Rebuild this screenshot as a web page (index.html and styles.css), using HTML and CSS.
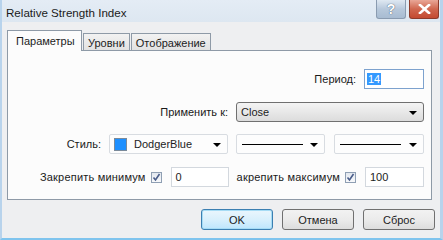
FILE: index.html
```html
<!DOCTYPE html>
<html lang="ru">
<head>
    <meta charset="UTF-8">
    <title>Relative Strength Index</title>
    <link rel="stylesheet" href="styles.css">
</head>
<body>
    <div class="window">
        <!-- заголовок окна -->
        <div class="titlebar">
            <span class="title">Relative Strength Index</span>
            <div class="caption-btns">
                <span class="cap-btn help">?</span>
                <span class="cap-btn close">
                    <svg width="13" height="10" viewBox="0 0 13 10"><path d="M2 1 L11 9 M11 1 L2 9" stroke="#fff" stroke-width="2.6" stroke-linecap="square"/></svg>
                </span>
            </div>
        </div>

        <!-- вкладки -->
        <div class="tabs">
            <div class="tab active">Параметры</div>
            <div class="tab">Уровни</div>
            <div class="tab">Отображение</div>
        </div>

        <div class="panel">
            <div class="row row-period">
                <span class="label">Период:</span>
                <span class="input focus w60"><span class="sel-text">14</span></span>
            </div>
            <div class="row row-apply">
                <span class="label">Применить к:</span>
                <span class="combo w188">Close<span class="arrow"></span></span>
            </div>
            <div class="row row-style">
                <span class="label">Стиль:</span>
                <span class="dd w119"><span class="swatch"></span>DodgerBlue<span class="arrow"></span></span>
                <span class="dd w89"><span class="line"></span><span class="arrow"></span></span>
                <span class="dd w90 gap9"><span class="line"></span><span class="arrow"></span></span>
            </div>
            <div class="row row-fix">
                <span class="label">Закрепить минимум</span>
                <span class="check"><svg width="9" height="9" viewBox="0 0 9 9"><path d="M1.5 4.5 L3.5 7 L7.5 1" fill="none" stroke="#4a5d8a" stroke-width="1.6"/></svg></span>
                <span class="input w58">0</span>
                <span class="label">акрепить максимум</span>
                <span class="check"><svg width="9" height="9" viewBox="0 0 9 9"><path d="M1.5 4.5 L3.5 7 L7.5 1" fill="none" stroke="#4a5d8a" stroke-width="1.6"/></svg></span>
                <span class="input w59">100</span>
            </div>
        </div>

        <div class="buttons">
            <span class="btn default">OK</span>
            <span class="btn">Отмена</span>
            <span class="btn">Сброс</span>
        </div>
    </div>
</body>
</html>
```

FILE: styles.css
```css
* { margin: 0; padding: 0; box-sizing: border-box; }
body { font-family: "Liberation Sans", Arial, sans-serif; font-size: 11px; color: #1c1c1c; background: #f0f0f0; }
.window { width: 443px; height: 240px; background: #eeeff1; border-left: 2px solid #b8d3ec; border-right: 3px solid #b8d3ec; border-bottom: 2px solid #7fc4ee; overflow: hidden; }
.titlebar { height: 22px; display: flex; justify-content: space-between; align-items: flex-start; background: linear-gradient(#e4ecf5, #dde7f1); }
.title { padding: 6px 0 0 4px; font-size: 11.6px; color: #1a1a1a; }
.caption-btns { display: flex; gap: 3px; margin-right: 1px; }
.cap-btn { width: 30px; height: 19px; display: flex; align-items: center; justify-content: center; border: 1px solid #8a9bb0; border-top: none; }
.help { background: linear-gradient(#dfe8f2, #b7c8db 50%, #a8bcd2); color: #fff; font-weight: bold; font-size: 14px; text-shadow: 0 0 1px #55687f, 0 0 1px #55687f; border-radius: 0 0 3px 3px; }
.close { width: 30px; background: linear-gradient(#e9a797, #d0674f 50%, #c44a31); border-color: #8d3b2b; border-radius: 0 0 3px 3px; }
.tabs { display: flex; align-items: flex-end; margin: 8px 0 0 5px; height: 20px; position: relative; z-index: 1; }
.tab { height: 17px; padding: 3px 4px 0 4px; border: 1px solid #8e9aa7; border-bottom: none; background: linear-gradient(#f2f2f2, #e2e2e2); margin-left: 1px; }
.tab.active { height: 21px; margin-bottom: -1px; padding: 4px 8px 0 8px; background: #fcfcfc; margin-left: 0; width: 75px; }
.panel { margin: 0 8px 0 5px; height: 150px; background: #fcfcfc; border: 1px solid #8e9aa7; padding: 18px 7px 0 0; }
.row { display: flex; justify-content: flex-end; align-items: center; gap: 8px; }
.row-apply { margin-top: 13px; }
.row-style { margin-top: 12px; }
.row-fix { margin-top: 13px; gap: 0; }
.label { color: #1a1a1a; }
.row-fix .label { letter-spacing: 0.2px; }
.input { height: 20px; border: 1px solid #d3d8de; background: #fff; padding: 3px 0 0 4px; }
.input.focus { border-color: #7da2ce; padding-left: 2px; }
.sel-text { background: #3399ff; color: #fff; padding: 0 1px; }
.w60 { width: 60px; }
.w58 { width: 58px; }
.w59 { width: 59px; }
.combo { width: 188px; height: 20px; border: 1px solid #707070; border-radius: 3px; background: linear-gradient(#f4f4f4, #e8e8e8 50%, #dcdcdc); padding: 3px 4px; position: relative; }
.arrow { position: absolute; right: 6px; top: 8px; width: 0; height: 0; border-left: 4px solid transparent; border-right: 4px solid transparent; border-top: 4px solid #000; }
.dd { height: 20px; border: 1px solid #d8dce1; border-radius: 2px; background: #fdfdfd; position: relative; display: flex; align-items: center; padding-left: 4px; }
.w119 { width: 119px; }
.w89 { width: 89px; }
.w90 { width: 90px; }
.gap9 { margin-left: 1px; }
.swatch { width: 13px; height: 13px; background: #1e90ff; border: 1px solid #7a8a9a; margin-right: 7px; }
.line { width: 61px; height: 1px; background: #000; margin-left: 1px; }
.row-fix .check { margin: 0 9px 0 5px; }
.row-fix .input + .label { margin-left: 8px; }
.check { width: 11px; height: 11px; border: 1px solid #8f9fb3; background: linear-gradient(#e3e8ef, #f8f9fb); display: flex; align-items: center; justify-content: center; }
.buttons { display: flex; justify-content: flex-end; gap: 9px; margin: 9px 5px 0 0; }
.btn { width: 72px; height: 21px; display: flex; align-items: center; justify-content: center; border: 1px solid #707070; border-radius: 3px; background: linear-gradient(#f2f2f2, #ebebeb 50%, #dddddd); }
.btn.default { border-color: #3c7fb1; box-shadow: inset 0 0 0 1px #a6dcf5; background: linear-gradient(#eaf6fd, #d9f0fc 50%, #bee6fd); }
```
